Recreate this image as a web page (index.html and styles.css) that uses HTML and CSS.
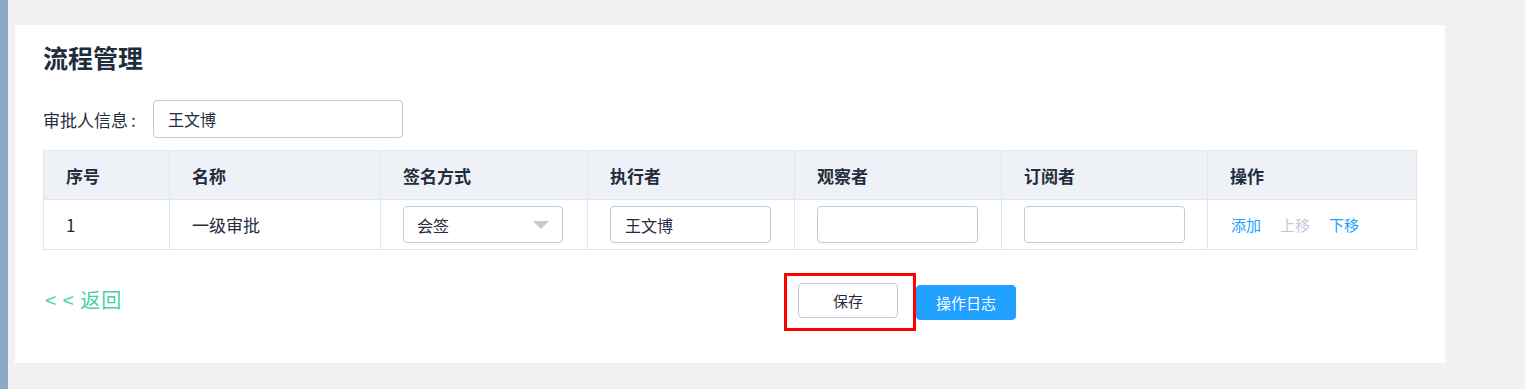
FILE: index.html
```html
<!DOCTYPE html>
<html lang="zh-CN">
<head>
    <meta charset="UTF-8">
    <title>流程管理</title>
    <link rel="stylesheet" href="styles.css">
</head>
<body>
    <div class="sidebar"></div>
    <div class="main">
        <div class="panel">
            <h2 class="title">流程管理</h2>

            <div class="form-row">
                <label class="form-label">审批人信息<span class="colon">:</span></label>
                <input class="text-input approver" type="text" value="王文博">
            </div>

            <table class="flow-table">
                <colgroup>
                    <col style="width: 126px">
                    <col style="width: 211px">
                    <col style="width: 207px">
                    <col style="width: 207px">
                    <col style="width: 207px">
                    <col style="width: 206px">
                    <col style="width: 209px">
                </colgroup>
                <thead>
                    <tr>
                        <th>序号</th>
                        <th>名称</th>
                        <th>签名方式</th>
                        <th>执行者</th>
                        <th>观察者</th>
                        <th>订阅者</th>
                        <th>操作</th>
                    </tr>
                </thead>
                <tbody>
                    <tr>
                        <td>1</td>
                        <td>一级审批</td>
                        <td>
                            <div class="select">
                                <span>会签</span>
                                <i class="select-arrow"></i>
                            </div>
                        </td>
                        <td><input class="text-input cell-input" type="text" value="王文博"></td>
                        <td><input class="text-input cell-input" type="text"></td>
                        <td><input class="text-input cell-input" type="text"></td>
                        <td>
                            <div class="ops">
                                <a class="op">添加</a>
                                <a class="op disabled">上移</a>
                                <a class="op">下移</a>
                            </div>
                        </td>
                    </tr>
                </tbody>
            </table>

            <div class="footer">
                <a class="back-link">&lt; &lt; 返回</a>
                <div class="actions">
                    <div class="highlight">
                        <button class="btn">保存</button>
                    </div>
                    <button class="btn btn-primary">操作日志</button>
                </div>
            </div>
        </div>
    </div>
</body>
</html>
```

FILE: styles.css
```css
body {
    margin: 0;
    height: 389px;
    display: flex;
    background-color: #f1f1f1;
    font-family: "Noto Sans CJK SC", "Noto Sans", sans-serif;
    color: #1f2d3d;
}

.sidebar {
    width: 8px;
    background-color: #8ea8cc;
}

.main {
    padding: 25px 0 0 7px;
}

.panel {
    width: 1430px;
    height: 338px;
    box-sizing: border-box;
    background-color: #fff;
    padding: 0 28px;
}

.title {
    margin: 0;
    padding-top: 16px;
    font-size: 25px;
    line-height: 32px;
    font-weight: bold;
    color: #1f2d3d;
}

.form-row {
    display: flex;
    align-items: center;
    margin-top: 27px;
}

.form-label {
    font-size: 17px;
    color: #1f2d3d;
    width: 110px;
}

.colon {
    margin-left: 3px;
}

.text-input {
    box-sizing: border-box;
    border: 1px solid #bfcbd9;
    border-radius: 4px;
    padding: 0 14px;
    font-family: inherit;
    font-size: 16px;
    color: #1f2d3d;
    outline: none;
    background: #fff;
}

.approver {
    width: 250px;
    height: 38px;
}

.flow-table {
    margin-top: 12px;
    width: 1373px;
    table-layout: fixed;
    border-collapse: collapse;
    border: 1px solid #dfe6ec;
}

.flow-table th,
.flow-table td {
    border: 1px solid #dfe6ec;
    padding: 0 0 0 22px;
    text-align: left;
    vertical-align: middle;
}

.flow-table th {
    height: 48px;
    background-color: #eef1f6;
    font-size: 17px;
    font-weight: bold;
    color: #1f2d3d;
}

.flow-table td {
    height: 49px;
    font-size: 17px;
    color: #1f2d3d;
}

.cell-input {
    width: 161px;
    height: 37px;
    display: block;
}

.select {
    box-sizing: border-box;
    width: 160px;
    height: 37px;
    border: 1px solid #bfcbd9;
    border-radius: 4px;
    padding: 0 13px;
    display: flex;
    align-items: center;
    justify-content: space-between;
    font-size: 16px;
}

.select-arrow {
    width: 0;
    height: 0;
    border-left: 8px solid transparent;
    border-right: 8px solid transparent;
    border-top: 8px solid #bfcbd9;
}

.ops {
    display: flex;
    gap: 19px;
    padding-left: 1px;
}

.op {
    font-size: 15px;
    color: #20a0ff;
    cursor: pointer;
}

.op.disabled {
    color: #bfcbd9;
    cursor: default;
}

.footer {
    display: flex;
    align-items: center;
    margin-top: 23px;
}

.back-link {
    width: 741px;
    padding-left: 2px;
    margin-bottom: 6px;
    box-sizing: border-box;
    font-size: 20px;
    letter-spacing: 1px;
    color: #46d2a0;
    cursor: pointer;
}

.actions {
    display: flex;
    align-items: center;
}

.highlight {
    display: flex;
    border: 3px solid #ff0000;
    padding: 7px 15px 10px 11px;
}

.btn {
    width: 100px;
    height: 35px;
    box-sizing: border-box;
    border: 1px solid #bfcbd9;
    border-radius: 4px;
    background-color: #fff;
    font-family: inherit;
    font-size: 15px;
    color: #1f2d3d;
    cursor: pointer;
}

.btn-primary {
    border-color: #20a0ff;
    background-color: #20a0ff;
    color: #fff;
}
```
